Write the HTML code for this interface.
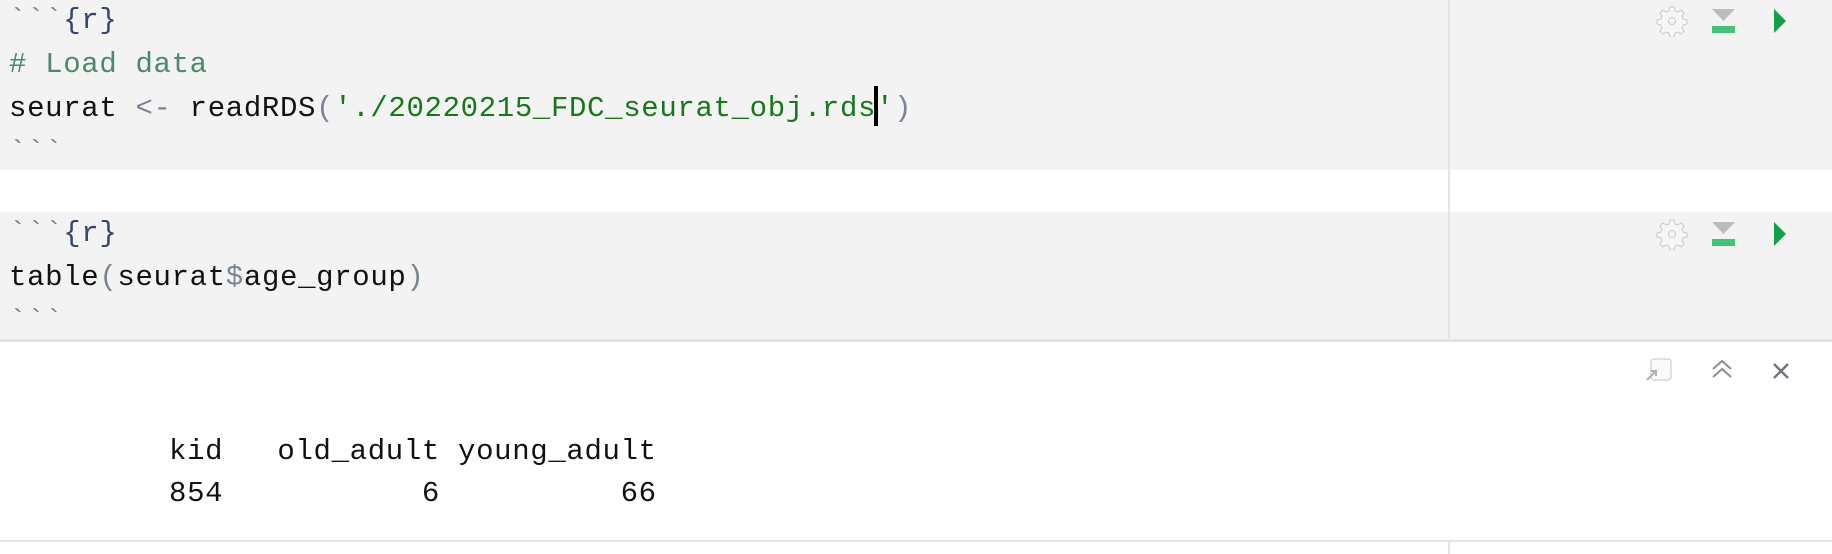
<!DOCTYPE html>
<html><head><meta charset="utf-8"><style>
html,body{margin:0;padding:0}
body{width:1832px;height:554px;background:#fff;position:relative;overflow:hidden;font-family:"Liberation Mono","DejaVu Sans Mono",monospace;}
.blk{position:absolute;left:0;width:1832px;background:#f3f3f3;z-index:0}
.ln{position:absolute;z-index:5;left:9px;font-size:29px;letter-spacing:0.66px;white-space:pre;line-height:44px;color:#111111;margin:0;font-family:"Liberation Mono","DejaVu Sans Mono",monospace;}
.c{color:#4a8a6a}.s{color:#16781a}.g{color:#7a8494}.b{color:#34466e}
.vl{position:absolute;left:1448px;width:2px;background:#e4e4e4;z-index:1}
.ic{position:absolute;z-index:6}
</style></head><body>
<div class="blk" style="top:0;height:170px"></div>
<div class="blk" style="top:212px;height:127px"></div>
<div style="position:absolute;top:339px;left:0;width:1832px;height:3px;background:#e2e2e2;z-index:1"></div>
<div style="position:absolute;top:540px;left:0;width:1832px;height:2px;background:#e6e6e6;z-index:1"></div>
<div class="vl" style="top:0;height:340px"></div>
<div class="vl" style="top:542px;height:12px"></div>

<pre class="ln" style="top:-1px"><span class="g">&#96;&#96;&#96;</span><span class="b">{r}</span></pre>
<pre class="ln" style="top:43px"><span class="c"># Load data</span></pre>
<pre class="ln" style="top:87px">seurat <span class="g">&lt;-</span> readRDS<span class="g">(</span><span class="s">'./20220215_FDC_seurat_obj.rds'</span><span class="g">)</span></pre>
<div class="ic" style="left:874px;top:86px;width:4px;height:40px;background:#000"></div>
<pre class="ln" style="top:131px"><span class="g">&#96;&#96;&#96;</span></pre>

<pre class="ln" style="top:212px"><span class="g">&#96;&#96;&#96;</span><span class="b">{r}</span></pre>
<pre class="ln" style="top:256px">table<span class="g">(</span>seurat<span class="g">$</span>age_group<span class="g">)</span></pre>
<pre class="ln" style="top:300px"><span class="g">&#96;&#96;&#96;</span></pre>

<pre class="ln" style="top:431px;left:169px;line-height:42px">kid   old_adult young_adult
854           6          66</pre>

<svg class="ic" style="left:1656px;top:5px" width="32" height="32" viewBox="0 0 32 32"><path d="M14 2h4l1 4 3 1 3-2 3 3-2 3 1 3 4 1v4l-4 1-1 3 2 3-3 3-3-2-3 1-1 4h-4l-1-4-3-1-3 2-3-3 2-3-1-3-4-1v-4l4-1 1-3-2-3 3-3 3 2 3-1z" fill="#f6f6f6" stroke="#c8c8c8" stroke-width="1"/><circle cx="16" cy="16" r="3.5" fill="none" stroke="#c8c8c8"/></svg>
<svg class="ic" style="left:1712px;top:9px" width="24" height="24"><path d="M0 0h23l-11.5 12z" fill="#bbbcbe"/><rect x="0" y="17" width="23" height="7" fill="#45c278"/></svg>
<svg class="ic" style="left:1774px;top:9px" width="14" height="24"><path d="M0 0l12 12-12 12z" fill="#13a048"/></svg>

<svg class="ic" style="left:1656px;top:218px" width="32" height="32" viewBox="0 0 32 32"><path d="M14 2h4l1 4 3 1 3-2 3 3-2 3 1 3 4 1v4l-4 1-1 3 2 3-3 3-3-2-3 1-1 4h-4l-1-4-3-1-3 2-3-3 2-3-1-3-4-1v-4l4-1 1-3-2-3 3-3 3 2 3-1z" fill="#f6f6f6" stroke="#c8c8c8" stroke-width="1"/><circle cx="16" cy="16" r="3.5" fill="none" stroke="#c8c8c8"/></svg>
<svg class="ic" style="left:1712px;top:222px" width="24" height="24"><path d="M0 0h23l-11.5 12z" fill="#bbbcbe"/><rect x="0" y="17" width="23" height="7" fill="#45c278"/></svg>
<svg class="ic" style="left:1774px;top:222px" width="14" height="24"><path d="M0 0l12 12-12 12z" fill="#13a048"/></svg>

<svg class="ic" style="left:1645px;top:358px" width="28" height="24"><rect x="6" y="1" width="20" height="21" rx="3" fill="#fafafa" stroke="#c4c4c4"/><path d="M2 22l8-8M6 13h5v5" fill="none" stroke="#b0b0b0" stroke-width="2"/></svg>
<svg class="ic" style="left:1711px;top:359px" width="22" height="20"><path d="M2 10l9-8 9 8M2 18l9-8 9 8" fill="none" stroke="#8a8e95" stroke-width="2"/></svg>
<svg class="ic" style="left:1772px;top:362px" width="18" height="18"><path d="M2 2l14 14M16 2L2 16" stroke="#70747c" stroke-width="2.4"/></svg>
</body></html>
